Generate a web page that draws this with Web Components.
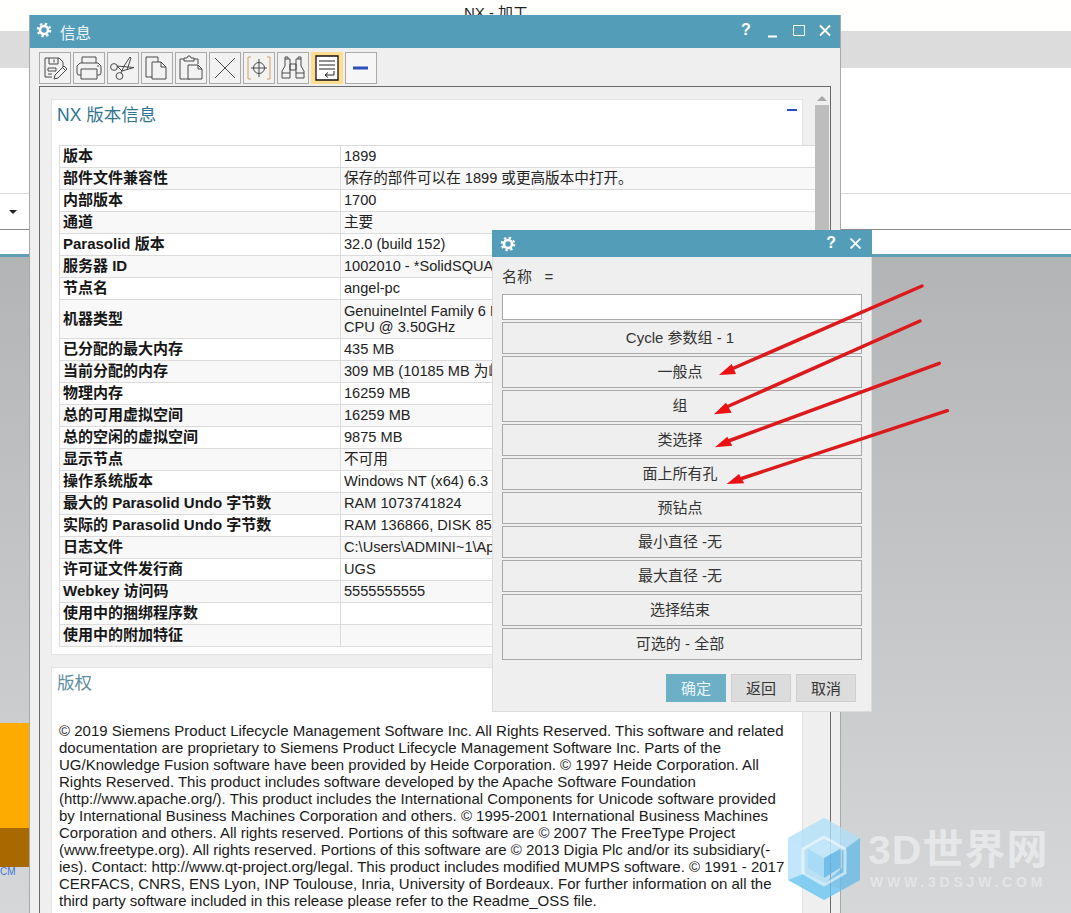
<!DOCTYPE html>
<html lang="zh">
<head>
<meta charset="utf-8">
<title>NX - 加工</title>
<style>
html, body { margin: 0; padding: 0; width: 1071px; height: 913px; overflow: hidden; background: #fff; }
body { font: 15px "Liberation Sans", "Noto Sans CJK SC", sans-serif; color: #222; }
</style>
</head>
<body>
<nx-desktop>
    <nx-window slot="windows">
        <nx-toolbar></nx-toolbar>
        <info-frame>
            <info-section heading="NX 版本信息" collapsible>
                <info-table></info-table>
            </info-section>
            <info-section heading="版权" tone="light">
                <copyright-text></copyright-text>
            </info-section>
        </info-frame>
    </nx-window>
    <name-dialog slot="windows"></name-dialog>
    <red-arrows slot="windows"></red-arrows>
    <site-mark slot="windows"></site-mark>
</nx-desktop>

<script>
const FONT = '"Liberation Sans", "Noto Sans CJK SC", sans-serif';

const gearSvg = `<svg width="16" height="16" viewBox="0 0 16 16" fill="none" stroke="#fff">
    <circle cx="8" cy="8" r="4" stroke-width="2.6"/>
    <circle cx="8" cy="8" r="6.2" stroke-width="2.2" stroke-dasharray="2.4 2.47"/>
</svg>`;

class NxDesktop extends HTMLElement {
    constructor() {
        super();
        this.attachShadow({ mode: 'open' });
    }

    connectedCallback() {
        this.shadowRoot.innerHTML = `
            <style>
                :host { display: block; position: relative; width: 1071px; height: 913px; overflow: hidden; }
                .top { height: 31px; background: #fffffd; text-align: center; box-sizing: border-box; }
                .top span { display: inline-block; margin-top: 4px; margin-left: -79px; font-size: 15px; line-height: 17px; color: #222; }
                .band { height: 37px; background: #dcdcdc; }
                .ribbon { height: 125px; background: #fff; border-bottom: 1px solid #d9d9d9; }
                .combo { height: 35px; background: #fff; border-bottom: 1px solid #8a8a8a; display: flex; align-items: center; padding-left: 9px; }
                .combo i { width: 0; height: 0; border: 4px solid transparent; border-top: 4px solid #222; border-bottom: 0; }
                .status { height: 24px; background: #fff; border-bottom: 3px solid #5d9fb6; }
                .view {
                    height: 656px;
                    background: linear-gradient(#b3b4b6, #d6d7d9);
                    display: flex;
                    flex-direction: column;
                }
                .pad { height: 466px; }
                .orange { width: 29px; height: 105px; background: #fdab00; }
                .brown { width: 29px; height: 39px; background: #a86a00; }
                .cm { font-size: 10px; line-height: 10px; color: #3f74d6; }
            </style>
            <div class="top"><span>NX - 加工</span></div>
            <div class="band"></div>
            <div class="ribbon"></div>
            <div class="combo"><i></i></div>
            <div class="status"></div>
            <div class="view">
                <div class="pad"></div>
                <div class="orange"></div>
                <div class="brown"></div>
                <div class="cm">CM</div>
            </div>
            <slot name="windows"></slot>
        `;
    }
}

class NxWindow extends HTMLElement {
    constructor() {
        super();
        this.attachShadow({ mode: 'open' });
    }

    connectedCallback() {
        this.shadowRoot.innerHTML = `
            <style>
                :host {
                    position: absolute;
                    left: 29px;
                    top: 15px;
                    width: 812px;
                    height: 898px;
                    box-sizing: border-box;
                    display: flex;
                    flex-direction: column;
                    background: #efefef;
                    border-left: 1px solid #a9a9a9;
                    border-right: 1px solid #a9a9a9;
                    overflow: hidden;
                }
                .title {
                    height: 33px;
                    flex: none;
                    margin: 0 -1px;
                    background: #549db9;
                    display: flex;
                    align-items: center;
                    color: #eef6f9;
                }
                .gear { margin-left: 7px; margin-top: -4px; height: 16px; }
                .name { margin-left: 8px; font-size: 15.5px; }
                .ctl { margin-left: auto; margin-right: 3px; display: flex; align-items: center; margin-top: -1px; }
                .q { font: bold 16px ${FONT}; color: #fff; width: 16px; text-align: center; margin-right: 14px; margin-top: -3px; }
                svg.c { display: block; }
            </style>
            <div class="title">
                <span class="gear">${gearSvg}</span>
                <span class="name">信息</span>
                <span class="ctl">
                    <span class="q">?</span>
                    <svg class="c" width="70" height="14" viewBox="0 0 70 14" fill="none" stroke="#fff">
                        <path d="M0 12.5h9" stroke-width="2"/>
                        <path d="M25.5 1.5h11v10h-11z" stroke-width="1"/>
                        <path d="M52 1.5l10 10M62 1.5l-10 10" stroke-width="1.8"/>
                    </svg>
                </span>
            </div>
            <slot></slot>
        `;
    }
}

const toolIcons = {
    save: `<path d="M6 6h14l4 4v8M6 6v19h7M10 6v6h9V6M15 7.5v3" /><path d="M9 16h8v3H9zM9 22h4"/><path d="M15 27l1-4 9-9 3 3-9 9zM23.5 15.5l3 3" fill="#f2f2f2"/>`,
    print: `<path d="M9 11V5h14v6M4 21v-7l3-3h18l3 3v7a2 2 0 0 1-2 2h-2M4 21a2 2 0 0 0 2 2h2"/><path d="M8 17h16v10H8zM24 14h2"/>`,
    cut: `<circle cx="7" cy="15" r="3.4"/><circle cx="12.5" cy="24" r="3.4"/><path d="M10 14l17 1.5-12 3.5zM14 21l3-7 6-9 1 1-4 12"/>`,
    copy: `<path d="M5 5h12v20H5z"/><path d="M11 10h9l5 5v12H11z" fill="#f2f2f2"/><path d="M20 10v5h5"/>`,
    paste: `<path d="M15 27H5V7h4M19 7h4v5"/><path d="M9 9V6h3l1-2h2l1 2h3v3z"/><path d="M13 13h10l4 4v10H13z" fill="#f2f2f2"/><path d="M23 13v4h4"/>`,
    del: `<path d="M6 6l20 20M26 6L6 26"/>`,
    center: `<path d="M8 5H5v22h3M24 5h3v22h-3" stroke="#d99a5b"/><circle cx="16" cy="16" r="5.5"/><path d="M16 7v18M8 16h16"/>`,
    find: `<path d="M5 26v-7l3-5V7h5v19zM27 26v-7l-3-5V7h-5v19zM13 12h6v6h-6zM8 7V5h3v2M21 7V5h3v2M5 21h8M19 21h8"/>`,
    wrap: `<path d="M5 4h22v24H5z" stroke="#111" stroke-width="1.3" fill="#fff"/><path d="M8 9h16M8 13h16M8 17h16" stroke="#222"/><path d="M23 19v4h-9M17 20.5L14 23l3 2.5" stroke="#222"/>`,
    dash: `<path d="M8 16h15" stroke="#2b4fbd" stroke-width="3"/>`,
};

class NxToolbar extends HTMLElement {
    constructor() {
        super();
        this.attachShadow({ mode: 'open' });
    }

    connectedCallback() {
        const names = ['save', 'print', 'cut', 'copy', 'paste', 'del', 'center', 'find', 'wrap', 'dash'];
        const btns = names.map(n => `<div class="b ${n}"><svg width="30" height="30" viewBox="1 1 30 30" fill="none" stroke="#4a4a4a" stroke-width="1">${toolIcons[n]}</svg></div>`).join('');
        this.shadowRoot.innerHTML = `
            <style>
                :host { display: flex; flex: none; gap: 2px; padding: 4px 0 0 9px; height: 34px; }
                .b { width: 32px; height: 32px; box-sizing: border-box; border: 1px solid #ababab; background: #f2f2f2; }
                .b svg { display: block; }
                .wrap { background: #fedd8e; border-color: #fedd8e; }
                .dash { background: #f6f6f6; }
            </style>
            ${btns}
        `;
    }
}

class InfoFrame extends HTMLElement {
    constructor() {
        super();
        this.attachShadow({ mode: 'open' });
    }

    connectedCallback() {
        this.shadowRoot.innerHTML = `
            <style>
                :host {
                    display: flex;
                    flex: 1;
                    min-height: 0;
                    margin-left: 9px;
                    width: 792px;
                    box-sizing: border-box;
                    border: 1px solid #6a6a6a;
                    border-bottom: 0;
                    padding: 12px 0 0 11px;
                    gap: 12px;
                }
                .col { width: 752px; flex: none; display: flex; flex-direction: column; gap: 12px; }
                .bar { width: 14px; flex: none; margin-top: -3px; }
                .up { width: 0; height: 0; margin: 0 auto 4px; border: 5px solid transparent; border-bottom: 5px solid #a8a8a8; border-top: 0; }
                .thumb { height: 590px; background: #bdbdbd; }
            </style>
            <div class="col"><slot></slot></div>
            <div class="bar"><div class="up"></div><div class="thumb"></div></div>
        `;
    }
}

class InfoSection extends HTMLElement {
    constructor() {
        super();
        this.attachShadow({ mode: 'open' });
    }

    connectedCallback() {
        const light = this.getAttribute('tone') === 'light';
        const dash = this.hasAttribute('collapsible') ? '<span class="dash"></span>' : '';
        this.shadowRoot.innerHTML = `
            <style>
                :host {
                    display: block;
                    flex: none;
                    box-sizing: border-box;
                    background: #fff;
                    border: 1px solid #e4e4e4;
                    padding: 0 0 7px 7px;
                }
                h2 {
                    position: relative;
                    margin: 0;
                    height: 45px;
                    padding-top: 4px;
                    box-sizing: border-box;
                    font: normal 17.5px/22px ${FONT};
                    color: ${light ? '#5f8ea0' : '#2f7590'};
                    text-indent: -2px;
                }
                .dash { position: absolute; right: 5px; top: 9px; width: 10px; height: 2px; background: #2b4fbd; }
            </style>
            <h2>${this.getAttribute('heading')}${dash}</h2>
            <slot></slot>
        `;
    }
}

const infoRows = [
    ['版本', '1899'],
    ['部件文件兼容性', '保存的部件可以在 1899 或更高版本中打开。'],
    ['内部版本', '1700'],
    ['通道', '主要'],
    ['Parasolid 版本', '32.0 (build 152)'],
    ['服务器 ID', '1002010 - *SolidSQUAD*'],
    ['节点名', 'angel-pc'],
    ['机器类型', 'GenuineIntel Family 6 Model<br>CPU @ 3.50GHz', 'tall'],
    ['已分配的最大内存', '435 MB'],
    ['当前分配的内存', '309 MB (10185 MB 为峰值)'],
    ['物理内存', '16259 MB'],
    ['总的可用虚拟空间', '16259 MB'],
    ['总的空闲的虚拟空间', '9875 MB'],
    ['显示节点', '不可用'],
    ['操作系统版本', 'Windows NT (x64) 6.3'],
    ['最大的 Parasolid Undo 字节数', 'RAM 1073741824'],
    ['实际的 Parasolid Undo 字节数', 'RAM 136866, DISK 85'],
    ['日志文件', 'C:\\Users\\ADMINI~1\\AppData'],
    ['许可证文件发行商', 'UGS'],
    ['Webkey 访问码', '5555555555'],
    ['使用中的捆绑程序数', ''],
    ['使用中的附加特征', ''],
];

class InfoTable extends HTMLElement {
    constructor() {
        super();
        this.attachShadow({ mode: 'open' });
    }

    connectedCallback() {
        const rows = infoRows.map((r, i) => `
            <div class="row ${i % 2 ? 'alt' : ''} ${r[2] || ''}">
                <div class="k"><span>${r[0]}</span></div>
                <div class="v">${r[1]}</div>
            </div>`).join('');
        this.shadowRoot.innerHTML = `
            <style>
                :host {
                    display: block;
                    width: 756px;
                    margin-right: -12px;
                    border-top: 1px solid #dcdcdc;
                    border-left: 1px solid #dcdcdc;
                    box-sizing: border-box;
                }
                .row { display: flex; height: 22px; box-sizing: border-box; border-bottom: 1px solid #dcdcdc; background: #fff; align-items: center; line-height: 16px; }
                .alt { background: #f8f8f8; }
                .tall { height: 39px; }
                .k {
                    width: 277px;
                    flex: none;
                    height: 100%;
                    padding-left: 3px;
                    display: flex;
                    align-items: center;
                    font-size: 15px;
                    font-weight: bold;
                    color: #161616;
                    white-space: nowrap;
                    border-right: 1px solid #dcdcdc;
                }
                .k span { margin-top: -1px; }
                .v { padding-left: 3px; margin-top: -1px; font-size: 14.6px; color: #222; white-space: nowrap; }
            </style>
            ${rows}
        `;
    }
}

const copyrightLines = [
    '© 2019 Siemens Product Lifecycle Management Software Inc. All Rights Reserved. This software and related',
    'documentation are proprietary to Siemens Product Lifecycle Management Software Inc. Parts of the',
    'UG/Knowledge Fusion software have been provided by Heide Corporation. © 1997 Heide Corporation. All',
    'Rights Reserved. This product includes software developed by the Apache Software Foundation',
    '(http://www.apache.org/). This product includes the International Components for Unicode software provided',
    'by International Business Machines Corporation and others. © 1995-2001 International Business Machines',
    'Corporation and others. All rights reserved. Portions of this software are © 2007 The FreeType Project',
    '(www.freetype.org). All rights reserved. Portions of this software are © 2013 Digia Plc and/or its subsidiary(-',
    'ies). Contact: http://www.qt-project.org/legal. This product includes modified MUMPS software. © 1991 - 2017',
    'CERFACS, CNRS, ENS Lyon, INP Toulouse, Inria, University of Bordeaux. For further information on all the',
    'third party software included in this release please refer to the Readme_OSS file.',
];

class CopyrightText extends HTMLElement {
    constructor() {
        super();
        this.attachShadow({ mode: 'open' });
    }

    connectedCallback() {
        this.shadowRoot.innerHTML = `
            <style>
                :host { display: block; padding-top: 9px; font-size: 15px; line-height: 17px; color: #1a1a1a; white-space: nowrap; }
            </style>
            ${copyrightLines.join('<br>')}
        `;
    }
}

class NameDialog extends HTMLElement {
    constructor() {
        super();
        this.attachShadow({ mode: 'open' });
    }

    connectedCallback() {
        const items = ['Cycle 参数组 - 1', '一般点', '组', '类选择', '面上所有孔', '预钻点', '最小直径 -无', '最大直径 -无', '选择结束', '可选的 - 全部'];
        this.shadowRoot.innerHTML = `
            <style>
                :host {
                    position: absolute;
                    left: 492px;
                    top: 230px;
                    width: 380px;
                    height: 482px;
                    box-sizing: border-box;
                    background: #efefef;
                    border: 1px solid #dcdcdc;
                    border-top: 0;
                    display: flex;
                    flex-direction: column;
                }
                .title { height: 27px; flex: none; margin: 0 -1px; background: #549db9; display: flex; align-items: center; padding: 0 11px 0 8px; color: #fff; }
                .title .gear { height: 16px; }
                .ctl { margin-left: auto; display: flex; align-items: center; gap: 14px; }
                .q { font: bold 16px ${FONT}; margin-top: -2px; }
                .label { height: 37px; flex: none; margin-left: 9px; font-size: 15px; line-height: 40px; color: #333; white-space: pre; }
                .list { display: flex; flex-direction: column; gap: 2px; padding: 0 9px; }
                .input { height: 26px; box-sizing: border-box; background: #fff; border: 1px solid #a9a9a9; }
                .item { height: 32px; box-sizing: border-box; border: 1px solid #a9a9a9; padding-right: 4px; text-align: center; line-height: 30px; font-size: 15px; color: #333; }
                .foot { display: flex; justify-content: flex-end; gap: 5px; padding: 14px 15px 0 0; }
                .btn { width: 60px; height: 28px; text-align: center; background: #dcdcdc; color: #333; font-size: 15px; box-sizing: border-box; border: 1px solid #cfcfcf; line-height: 27px; }
                .ok { background: #6cafc6; border-color: #6cafc6; color: #e9f5f9; }
            </style>
            <div class="title">
                <span class="gear">${gearSvg}</span>
                <span class="ctl">
                    <span class="q">?</span>
                    <svg width="11" height="11" viewBox="0 0 11 11" fill="none" stroke="#fff" stroke-width="1.8"><path d="M.5.5l10 10M10.5.5l-10 10"/></svg>
                </span>
            </div>
            <div class="label">名称   =</div>
            <div class="list">
                <div class="input"></div>
                ${items.map(t => `<div class="item">${t}</div>`).join('')}
            </div>
            <div class="foot">
                <div class="btn ok">确定</div>
                <div class="btn">返回</div>
                <div class="btn">取消</div>
            </div>
        `;
    }
}

class RedArrows extends HTMLElement {
    constructor() {
        super();
        this.attachShadow({ mode: 'open' });
    }

    connectedCallback() {
        const arrows = [
            [[922, 286], [727, 371], '719,375 731.7,364 736,374'],
            [[920, 321], [722, 409], '714,414.3 726,402.7 731.7,412.7'],
            [[939.3, 363.3], [723, 443], '715,447.3 727.3,436.7 732.3,445.7'],
            [[947.3, 410.7], [734, 481], '726.7,484 739,474 744.3,483.3'],
        ];
        this.shadowRoot.innerHTML = `
            <style>
                :host { position: absolute; left: 0; top: 0; pointer-events: none; }
                svg { display: block; }
            </style>
            <svg width="1071" height="913" viewBox="0 0 1071 913">
                ${arrows.map(a => `<path d="M${a[0][0]} ${a[0][1]}L${a[1][0]} ${a[1][1]}" stroke="#dc1a1c" stroke-width="3.5" stroke-linecap="round"/><polygon points="${a[2]}" fill="#ee0f12"/>`).join('')}
            </svg>
        `;
    }
}

class SiteMark extends HTMLElement {
    constructor() {
        super();
        this.attachShadow({ mode: 'open' });
    }

    connectedCallback() {
        this.shadowRoot.innerHTML = `
            <style>
                :host { position: absolute; left: 788px; top: 818px; display: flex; gap: 8px; pointer-events: none; }
                svg { display: block; flex: none; }
                .txt { color: rgba(238,239,241,.72); font-family: ${FONT}; font-weight: bold; white-space: nowrap; }
                .big { font-size: 41px; line-height: 44px; margin-top: 10px; letter-spacing: 1px; }
                .small { font-size: 14px; line-height: 14px; margin-top: 3px; letter-spacing: 3.8px; margin-left: 2px; color: rgba(238,239,241,.6); }
            </style>
            <svg width="72" height="82" viewBox="0 0 72 82">
                <polygon points="36,0 72,20 72,62 36,82 0,62 0,20" fill="#8fd3f6" fill-opacity=".55"/>
                <polygon points="36,0 72,20 54,33 36,22 18,33 0,20" fill="#bfe6fa" fill-opacity=".5"/>
                <polygon points="72,20 72,62 54,72 36,66 54,50 54,33" fill="#54aee0" fill-opacity=".55"/>
                <polygon points="0,62 18,55 36,66 54,72 36,82" fill="#5cc0f0" fill-opacity=".6"/>
                <polygon points="36,19 57,31 57,55 36,67 15,55 15,31" fill="none" stroke="#fff" stroke-opacity=".55" stroke-width="3"/>
                <polygon points="36,22 52,31 36,40 20,31" fill="#c6e8fb" fill-opacity=".8"/>
                <polygon points="20,31 36,40 36,60 20,50" fill="#a6d9f7" fill-opacity=".85"/>
                <polygon points="52,31 36,40 36,60 52,50" fill="#62b6e6" fill-opacity=".8"/>
            </svg>
            <div class="txt">
                <div class="big">3D世界网</div>
                <div class="small">WWW.3DSJW.COM</div>
            </div>
        `;
    }
}

customElements.define('nx-desktop', NxDesktop);
customElements.define('nx-window', NxWindow);
customElements.define('nx-toolbar', NxToolbar);
customElements.define('info-frame', InfoFrame);
customElements.define('info-section', InfoSection);
customElements.define('info-table', InfoTable);
customElements.define('copyright-text', CopyrightText);
customElements.define('name-dialog', NameDialog);
customElements.define('red-arrows', RedArrows);
customElements.define('site-mark', SiteMark);
</script>
</body>
</html>
